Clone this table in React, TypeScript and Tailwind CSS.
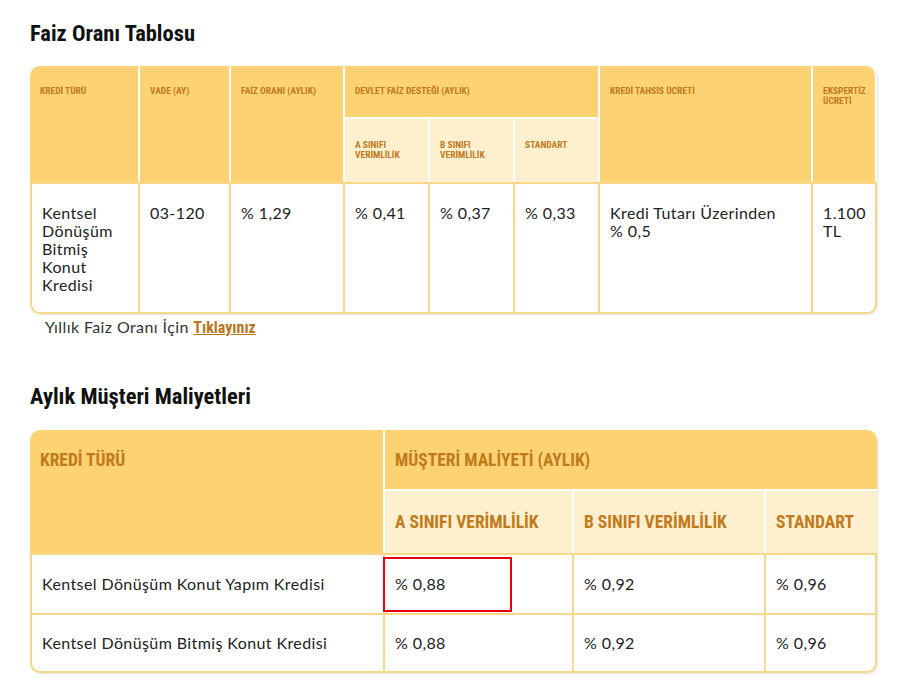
import React from "react";

const COND =
  '"Noto Sans Condensed", "Roboto Condensed", "Open Sans Condensed", "DejaVu Sans Condensed", sans-serif';
const BODY = 'Lato, "Noto Sans", sans-serif';

const th1 =
  "align-top text-left px-[10px] pt-[20px] bg-[#fdd272] text-[#c17b1c] font-bold text-[9.5px] leading-[10px] border-r-2 border-white font-stretch-condensed";
const td1 =
  "align-top text-left px-[10px] pt-[20px] pb-[10px] text-[16px] leading-[18px] tracking-[0.4px] text-[#222] border-r-2 border-t-2 border-b-2 border-[#f6d887]";

const th2 =
  "text-left px-[10px] font-bold text-[17.5px] leading-[22px] text-[#c17b1c] whitespace-nowrap font-stretch-condensed";

export default function App() {
  return (
    <div className="w-[908px] h-[689px] bg-white px-[30px] pt-[19px]" style={{ fontFamily: BODY }}>
      <h2
        className="text-[22.5px] leading-[28px] font-bold text-[#111] font-stretch-condensed"
        style={{ fontFamily: COND }}
      >
        Faiz Oranı Tablosu
      </h2>

      <div className="mt-[19px] w-[847px] rounded-[10px] shadow-[1px_1px_2px_rgba(0,0,0,0.12)]">
        <table className="w-[847px] table-fixed border-separate border-spacing-0">
          <colgroup>
            <col className="w-[110px]" />
            <col className="w-[91px]" />
            <col className="w-[114px]" />
            <col className="w-[85px]" />
            <col className="w-[85px]" />
            <col className="w-[85px]" />
            <col className="w-[213px]" />
            <col className="w-[64px]" />
          </colgroup>
          <thead style={{ fontFamily: COND }}>
            <tr className="h-[53px]">
              <th rowSpan={2} className={th1 + " rounded-tl-[10px]"}>KREDİ TÜRÜ</th>
              <th rowSpan={2} className={th1}>VADE (AY)</th>
              <th rowSpan={2} className={th1}>FAİZ ORANI (AYLIK)</th>
              <th colSpan={3} className={th1 + " border-b-2"}>DEVLET FAİZ DESTEĞİ (AYLIK)</th>
              <th rowSpan={2} className={th1}>KREDİ TAHSİS ÜCRETİ</th>
              <th rowSpan={2} className={th1 + " border-r-0 rounded-tr-[10px]"}>
                EKSPERTİZ
                <br />
                ÜCRETİ
              </th>
            </tr>
            <tr className="h-[63px]">
              <th className={th1 + " bg-[#feefcf] pt-[21px]"}>
                A SINIFI
                <br />
                VERİMLİLİK
              </th>
              <th className={th1 + " bg-[#feefcf] pt-[21px]"}>
                B SINIFI
                <br />
                VERİMLİLİK
              </th>
              <th className={th1 + " bg-[#feefcf] pt-[21px]"}>STANDART</th>
            </tr>
          </thead>
          <tbody>
            <tr className="h-[132px]">
              <td className={td1 + " border-l-2 rounded-bl-[10px]"}>Kentsel Dönüşüm Bitmiş Konut Kredisi</td>
              <td className={td1}>03-120</td>
              <td className={td1}>% 1,29</td>
              <td className={td1}>% 0,41</td>
              <td className={td1}>% 0,37</td>
              <td className={td1}>% 0,33</td>
              <td className={td1}>
                Kredi Tutarı Üzerinden
                <br />% 0,5
              </td>
              <td className={td1 + " rounded-br-[10px]"}>1.100 TL</td>
            </tr>
          </tbody>
        </table>
      </div>

      <p className="mt-[3px] pl-[15px] text-[16px] leading-[20px] tracking-[0.4px] text-[#333]">
        Yıllık Faiz Oranı İçin{" "}
        <a
          href="#"
          className="font-bold text-[#b8761a] underline tracking-normal font-stretch-condensed"
          style={{ fontFamily: COND }}
        >
          Tıklayınız
        </a>
      </p>

      <h2
        className="mt-[44px] text-[22.5px] leading-[28px] font-bold text-[#111] font-stretch-condensed"
        style={{ fontFamily: COND }}
      >
        Aylık Müşteri Maliyetleri
      </h2>

      <div className="mt-[20px] w-[847px] rounded-[10px] shadow-[1px_1px_2px_rgba(0,0,0,0.12)]">
        <table className="w-[847px] table-fixed border-separate border-spacing-0">
          <colgroup>
            <col className="w-[355px]" />
            <col className="w-[189px]" />
            <col className="w-[192px]" />
            <col className="w-[111px]" />
          </colgroup>
          <thead style={{ fontFamily: COND }}>
            <tr className="h-[61px]">
              <th
                rowSpan={2}
                className={th2 + " align-top pt-[19px] bg-[#fdd272] border-r-2 border-white rounded-tl-[10px]"}
              >
                KREDİ TÜRÜ
              </th>
              <th
                colSpan={3}
                className={th2 + " align-top pt-[19px] bg-[#fdd272] border-b-2 border-white rounded-tr-[10px]"}
              >
                MÜŞTERİ MALİYETİ (AYLIK)
              </th>
            </tr>
            <tr className="h-[62px]">
              <th className={th2 + " align-middle bg-[#feefcf] border-r-2 border-white"}>A SINIFI VERİMLİLİK</th>
              <th className={th2 + " align-middle bg-[#feefcf] border-r-2 border-white"}>B SINIFI VERİMLİLİK</th>
              <th className={th2 + " align-middle bg-[#feefcf]"}>STANDART</th>
            </tr>
          </thead>
          <tbody className="text-[16px] leading-[20px] tracking-[0.4px] text-[#222]">
            <tr className="h-[60px]">
              <td className="px-[10px] border-l-2 border-r-2 border-t-2 border-[#f6d887]">
                Kentsel Dönüşüm Konut Yapım Kredisi
              </td>
              <td className="relative px-[10px] border-r-2 border-t-2 border-[#f6d887]">
                % 0,88
                <span className="absolute left-[-2px] top-[2px] w-[129px] h-[55px] border-2 border-[#e3000f]" />
              </td>
              <td className="px-[10px] border-r-2 border-t-2 border-[#f6d887]">% 0,92</td>
              <td className="px-[10px] border-r-2 border-t-2 border-[#f6d887]">% 0,96</td>
            </tr>
            <tr className="h-[60px]">
              <td className="px-[10px] border-l-2 border-r-2 border-t-2 border-b-2 border-[#f6d887] rounded-bl-[10px]">
                Kentsel Dönüşüm Bitmiş Konut Kredisi
              </td>
              <td className="px-[10px] border-r-2 border-t-2 border-b-2 border-[#f6d887]">% 0,88</td>
              <td className="px-[10px] border-r-2 border-t-2 border-b-2 border-[#f6d887]">% 0,92</td>
              <td className="px-[10px] border-r-2 border-t-2 border-b-2 border-[#f6d887] rounded-br-[10px]">
                % 0,96
              </td>
            </tr>
          </tbody>
        </table>
      </div>
    </div>
  );
}
